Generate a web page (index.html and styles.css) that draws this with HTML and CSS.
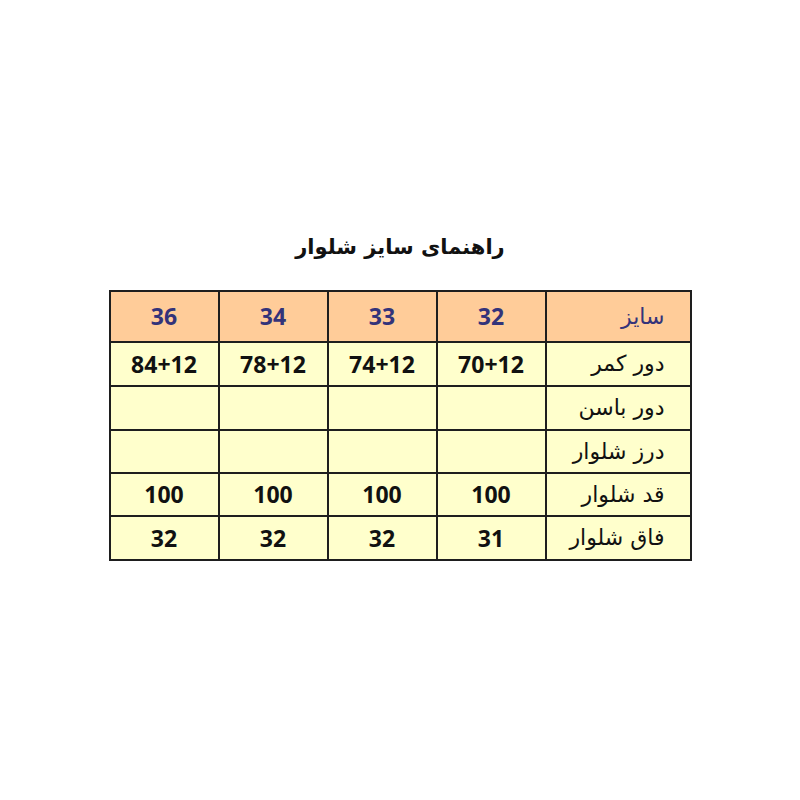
FILE: index.html
```html
<!DOCTYPE html>
<html lang="fa">
<head>
<meta charset="utf-8">
<link rel="stylesheet" href="styles.css">
</head>
<body>
<main class="page">
  <h1 class="title" dir="rtl">راهنمای سایز شلوار</h1>
  <table class="size-table" dir="rtl">
    <colgroup>
      <col class="col-label">
      <col class="col-size">
      <col class="col-size">
      <col class="col-size">
      <col class="col-size">
    </colgroup>
    <thead>
      <tr class="head-row">
        <th class="label head-label">سایز</th>
        <th>32</th>
        <th>33</th>
        <th>34</th>
        <th>36</th>
      </tr>
    </thead>
    <tbody>
      <tr class="r1">
        <td class="label">دور کمر</td>
        <td>70+12</td>
        <td>74+12</td>
        <td>78+12</td>
        <td>84+12</td>
      </tr>
      <tr class="r2">
        <td class="label">دور باسن</td>
        <td></td><td></td><td></td><td></td>
      </tr>
      <tr class="r3">
        <td class="label">درز شلوار</td>
        <td></td><td></td><td></td><td></td>
      </tr>
      <tr class="r4">
        <td class="label">قد شلوار</td>
        <td>100</td><td>100</td><td>100</td><td>100</td>
      </tr>
      <tr class="r5">
        <td class="label">فاق شلوار</td>
        <td>31</td><td>32</td><td>32</td><td>32</td>
      </tr>
    </tbody>
  </table>
</main>
</body>
</html>
```
FILE: styles.css
```css
html, body {
  margin: 0;
  padding: 0;
  background: #ffffff;
}

.page {
  width: 800px;
  height: 800px;
  display: flex;
  flex-direction: column;
  align-items: center;
  padding-top: 230px;
  box-sizing: border-box;
}

.title {
  margin: 0 0 26px 0;
  font-family: "DejaVu Sans", sans-serif;
  font-size: 21px;
  font-weight: bold;
  line-height: 34px;
  color: #111111;
}

.size-table {
  border-collapse: collapse;
  table-layout: fixed;
  width: 583px;
  border: 2px solid #1e1e1e;
}

.col-label { width: 145px; }
.col-size { width: 109px; }

.size-table th,
.size-table td {
  border: 2px solid #1e1e1e;
  padding: 0;
  text-align: center;
  vertical-align: middle;
  font-family: "Open Sans", "Liberation Sans", sans-serif;
  font-weight: bold;
  font-size: 23px;
  line-height: 1;
  color: #111111;
  background: #ffffcc;
}

.head-row th {
  background: #ffcc99;
  color: #33337a;
  height: 49px;
}

.size-table .label {
  text-align: right;
  padding-right: 25px;
  font-family: "DejaVu Sans", sans-serif;
  font-weight: normal;
  font-size: 22px;
}

.size-table .head-label {
  color: #33337a;
}

.r1 td { height: 42px; }
.r2 td { height: 42px; }
.r3 td { height: 41px; }
.r4 td { height: 41px; }
.r5 td { height: 42px; }
```
